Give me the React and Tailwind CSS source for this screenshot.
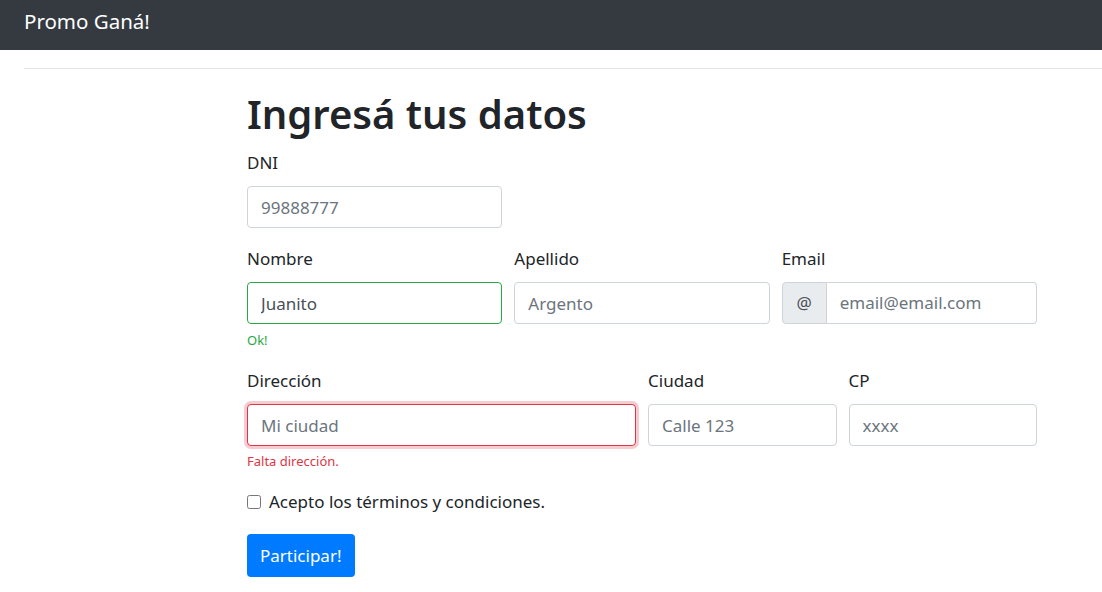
import { useState } from 'react';

function Field({ label, children, className = '' }) {
    return (
        <div className={className}>
            <label className="block text-[17px] leading-[24px] mb-[11px]">{label}</label>
            {children}
        </div>
    );
}

const inputBase = "block w-full h-[42px] rounded-[4px] border bg-white px-[13px] text-[17px] text-[#495057] placeholder:text-[#6c757d] outline-none";

export default function App() {
    const [nombre, setNombre] = useState('Juanito');
    const [acepto, setAcepto] = useState(false);

    return (
        <div className="min-h-screen bg-white text-[#212529] font-['Noto_Sans',sans-serif]">
            <nav className="h-[50px] bg-[#343a40] px-6 pt-[6px]">
                <span className="text-[20.5px] leading-[30px] text-white">Promo Ganá!</span>
            </nav>
            <div className="pl-6">
                <hr className="mt-[18px] border-0 border-t border-[#e5e5e5]" />
            </div>

            <form className="ml-[247px] w-[790px]" onSubmit={(e) => e.preventDefault()}>
                <h1 className="mt-[18px] text-[40px] leading-[54px] font-semibold">Ingresá tus datos</h1>

                <div className="grid grid-cols-3 gap-x-[12px] mt-[10px]">
                    <Field label="DNI">
                        <input className={inputBase + " border-[#ced4da]"} placeholder="99888777" />
                    </Field>
                </div>

                <div className="grid grid-cols-3 gap-x-[12px] mt-[19px]">
                    <Field label="Nombre">
                        <input className={inputBase + " border-[#28a745]"} value={nombre} onChange={(e) => setNombre(e.target.value)} />
                        <div className="mt-[7px] text-[13px] leading-[19px] text-[#28a745]">Ok!</div>
                    </Field>
                    <Field label="Apellido">
                        <input className={inputBase + " border-[#ced4da]"} placeholder="Argento" />
                    </Field>
                    <Field label="Email">
                        <div className="flex h-[42px]">
                            <span className="flex w-[45px] items-center justify-center rounded-l-[4px] border border-[#ced4da] bg-[#e9ecef] text-[17px] text-[#495057]">@</span>
                            <input className="block min-w-0 flex-1 rounded-r-[4px] border border-l-0 border-[#ced4da] bg-white px-[13px] text-[17px] text-[#495057] placeholder:text-[#6c757d] outline-none" placeholder="email@email.com" />
                        </div>
                    </Field>
                </div>

                <div className="grid grid-cols-4 gap-x-[12px] mt-[19px]">
                    <Field label="Dirección" className="col-span-2">
                        <input className={inputBase + " border-[#dc3545] shadow-[0_0_0_3px_rgba(220,53,69,0.25)]"} placeholder="Mi ciudad" />
                        <div className="mt-[6px] text-[13px] leading-[19px] text-[#dc3545]">Falta dirección.</div>
                    </Field>
                    <Field label="Ciudad">
                        <input className={inputBase + " border-[#ced4da]"} placeholder="Calle 123" />
                    </Field>
                    <Field label="CP">
                        <input className={inputBase + " border-[#ced4da]"} placeholder="xxxx" />
                    </Field>
                </div>

                <label className="mt-[18px] flex items-center gap-[8px] text-[17px] leading-[26px]">
                    <input type="checkbox" className="h-[14px] w-[14px]" checked={acepto} onChange={(e) => setAcepto(e.target.checked)} />
                    Acepto los términos y condiciones.
                </label>

                <button className="mt-[19px] h-[43px] rounded-[4px] bg-[#007bff] px-[13px] text-[17px] text-white">Participar!</button>
            </form>
        </div>
    );
}
